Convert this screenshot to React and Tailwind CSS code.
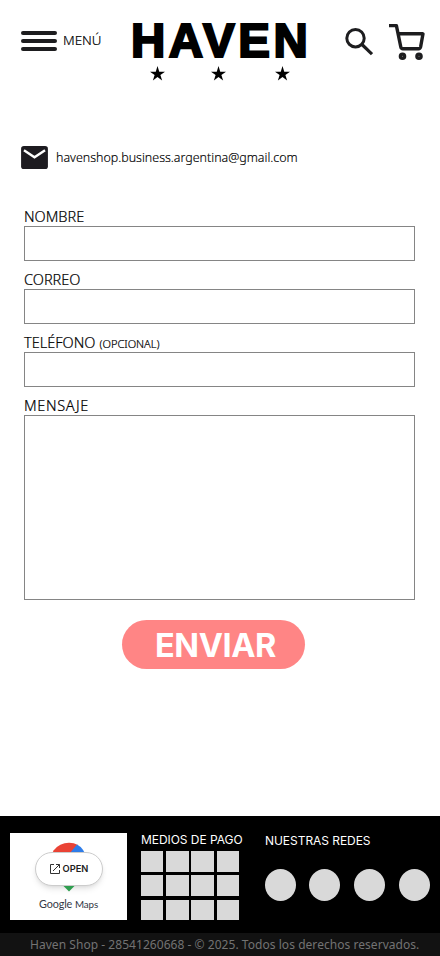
import React from "react";

function Star() {
  return (
    <svg className="h-[15px] w-[15px]" viewBox="0 0 24 24">
      <path d="M12 0l2.8 9H24l-7.4 5.3L19.4 23 12 17.6 4.6 23l2.8-8.7L0 9h9.2z" />
    </svg>
  );
}

function Header() {
  return (
    <header className="flex h-[145px] items-start pl-[21px] pt-[22px]">
      <div className="mt-[9px] flex h-5 w-[36px] flex-col justify-between">
        <span className="h-1 rounded-full bg-[#1d1d1f]" />
        <span className="h-1 rounded-full bg-[#1d1d1f]" />
        <span className="h-1 rounded-full bg-[#1d1d1f]" />
      </div>
      <span className="ml-[6px] mt-[8px] w-[69px] whitespace-nowrap font-['Noto_Sans',sans-serif] text-[13.4px] font-light leading-5 text-black [-webkit-text-stroke:0.2px_black]">
        MENÚ
      </span>
      <div className="w-[176px]">
        <h1 className="-ml-[1px] h-[36px] whitespace-nowrap pt-[1px] font-['Liberation_Sans',Arial,sans-serif] text-[47.5px] font-bold leading-[36px] tracking-[3.5px] text-black [-webkit-text-stroke:2.2px_black]">
          HAVEN
        </h1>
        <div className="mt-[8px] flex gap-[46px] pl-[18px]">
          <Star />
          <Star />
          <span className="ml-[3px]">
            <Star />
          </span>
        </div>
      </div>
      <svg className="ml-[37px] mt-[6px] h-[28px] w-[28px] shrink-0" viewBox="0 0 28 28" fill="none" stroke="#1d1d1f" strokeWidth="3">
        <circle cx="10.5" cy="10.2" r="8.7" />
        <path d="M17 16.5l10 9.7" strokeWidth="3.2" />
      </svg>
      <svg className="ml-[16px] mt-[1px] h-[38px] w-[36px] shrink-0" viewBox="0 0 36 38" fill="none" stroke="#1d1d1f" strokeWidth="3.4">
        <path d="M0 2.6h7.4l4.4 21.4q.4 1.8 2 1.8h15.8q1.6 0 2-1.8l2.4-13.2H9.5" strokeLinejoin="round" />
        <circle cx="13.5" cy="33.2" r="2.1" strokeWidth="3.4" />
        <circle cx="30" cy="33.2" r="2.1" strokeWidth="3.4" />
      </svg>
    </header>
  );
}

function Field({ label, note, tall, tracking = "" }) {
  return (
    <label className="mb-[10px] block font-['Noto_Sans',sans-serif] text-[14.5px] font-light leading-[17px] text-black [-webkit-text-stroke:0.2px_black]">
      <span className={`block h-[18px] whitespace-nowrap ${tracking}`}>
        {label}
        {note && <span className="ml-1 text-[11px]">{note}</span>}
      </span>
      {tall ? (
        <textarea className="block h-[185px] w-full resize-none border border-[#858585] bg-white" />
      ) : (
        <input className="block h-[35px] w-full border border-[#858585] bg-white" />
      )}
    </label>
  );
}

function MapCard() {
  return (
    <div className="mt-[17px] flex h-[87px] w-[117px] shrink-0 flex-col items-center bg-white pt-[9px]">
      <div className="relative h-[50px] w-[68px]">
        <svg className="absolute left-[16px] top-0 h-[50px] w-[36px]" viewBox="0 0 36 50">
          <path d="M0 16a18 16 0 0 1 27-13L15 17H0z" fill="#ea4335" />
          <path d="M26 2.5Q33 6 36 17H14z" fill="#2f7de9" />
        </svg>
        <div className="absolute left-0 top-[10px] flex h-[34px] w-[68px] items-center justify-center gap-[2px] rounded-full border border-[#ccc] bg-white shadow-md">
          <svg className="h-[12px] w-[12px]" viewBox="0 0 12 12" fill="none" stroke="#333" strokeWidth="1">
            <path d="M5 1.5H1.5v9h9V7M7 1.5h3.5V5M10.5 1.5L4 8" />
          </svg>
          <span className="font-['Inter',sans-serif] text-[9.3px] font-semibold leading-3 text-[#222]">OPEN</span>
        </div>
        <svg className="absolute left-[28px] top-[43.5px] h-[6px] w-[12px]" viewBox="0 0 12 6">
          <path d="M.5 0h11L6 5.5z" fill="#2f9e4f" />
        </svg>
      </div>
      <p className="mt-[5px] whitespace-nowrap font-['Lato',sans-serif] text-[10.8px] leading-[14px] tracking-[-0.1px] text-[#333844]">
        <span>Google</span> <span className="text-[9.8px] tracking-[-0.1px]">Maps</span>
      </p>
    </div>
  );
}

function Footer() {
  return (
    <footer className="bg-black">
      <div className="flex h-[117px] pl-[10px]">
        <MapCard />
        <div className="ml-[14px] mt-[16px] w-[124px]">
          <h2 className="h-[19px] whitespace-nowrap font-['Inter',sans-serif] text-[12px] leading-[16px] tracking-[-0.05px] text-white">MEDIOS DE PAGO</h2>
          <div className="grid h-[69px] w-[98px] grid-cols-[22px_23px_23px_22px] grid-rows-[21px_21px_20px] content-start justify-between gap-y-[3px]">
            {Array.from({ length: 12 }, (_, i) => (
              <span key={i} className={i > 7 ? "mt-[1px] -mb-[1px] bg-[#d9d9d9]" : "bg-[#d9d9d9]"} />
            ))}
          </div>
        </div>
        <div className="mt-[16px] w-[165px]">
          <h2 className="h-[37px] whitespace-nowrap font-['Inter',sans-serif] text-[12px] leading-[18px] tracking-[-0.05px] text-white">NUESTRAS REDES</h2>
          <div className="grid w-[165px] grid-cols-[44px_45px_45px_31px]">
            {[0, 1, 2, 3].map((i) => (
              <span key={i} className="h-8 w-[31px] rounded-[50%] bg-[#d9d9d9]" />
            ))}
          </div>
        </div>
      </div>
      <p className="h-[23px] whitespace-nowrap bg-[#121212] pl-[30px] font-['Noto_Sans',sans-serif] text-[12px] leading-[23px] tracking-[0.045px] text-[#737373]">
        Haven Shop - 28541260668 - © 2025. Todos los derechos reservados.
      </p>
    </footer>
  );
}

export default function App() {
  return (
    <div className="flex h-[956px] w-[440px] flex-col overflow-hidden bg-white">
      <Header />
      <main className="h-[671px]">
        <div className="flex h-[63px] items-start pl-[21px]">
          <svg className="mt-[1px] h-[23px] w-[27px]" viewBox="0 0 28 24">
            <rect width="28" height="24" rx="3" fill="#1d1b20" />
            <path d="M3 4.5l11 7.3 11-7.3" fill="none" stroke="white" strokeWidth="2.5" />
          </svg>
          <span className="ml-[8px] mt-[4px] whitespace-nowrap font-['Noto_Sans',sans-serif] text-[12.45px] font-light leading-[18px] text-black [-webkit-text-stroke:0.15px_black]">
            havenshop.business.argentina@gmail.com
          </span>
        </div>
        <form className="ml-[24px] w-[391px]">
          <Field label="NOMBRE" />
          <Field label="CORREO" />
          <Field label="TELÉFONO" note="(OPCIONAL)" />
          <Field label="MENSAJE" tall tracking="tracking-[0.65px]" />
          <button type="button" className="ml-[98px] mt-[20px] block h-[49px] w-[183px] rounded-full bg-[#ff8585] pl-[4px] pt-[2px] font-['Inter',sans-serif] text-[32.5px] font-bold leading-[48px] tracking-[-0.4px] text-white">
            ENVIAR
          </button>
        </form>
      </main>
      <Footer />
    </div>
  );
}
